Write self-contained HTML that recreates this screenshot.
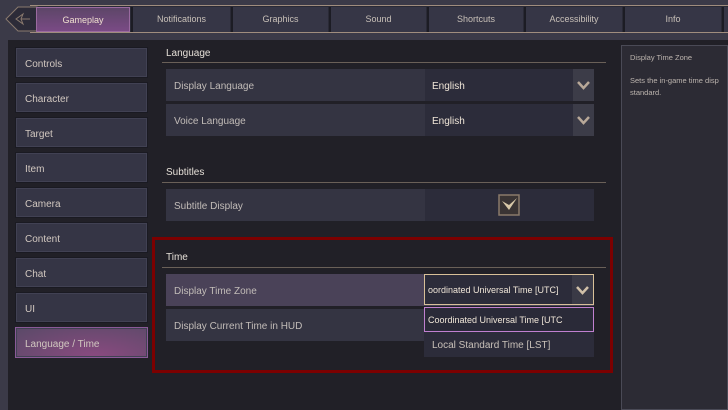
<!DOCTYPE html>
<html><head><style>
*{box-sizing:border-box;margin:0;padding:0}
body{width:728px;height:410px;overflow:hidden;background:#3b3a48;font-family:"Liberation Sans",sans-serif;position:relative;color:#c9c3c0}
.a{position:absolute}
.tabbar{left:30px;top:5px;width:698px;height:28px;background:#2a2a36;border-top:1px solid #a08d7e;border-bottom:1px solid #a08d7e}
.tab{top:7px;height:25px;background:#363646;color:#c8c0b8;font-size:9px;text-align:center;line-height:25px;border-left:2px solid #1c1c24}
.main{left:8px;top:40px;width:720px;height:370px;background:#212027}
.side{left:15px;height:31px;width:133px;background:#353545;border:1px solid #1a1a22;box-shadow:inset 0 0 0 1px #414153;font-size:10px;color:#d2c8c0;padding-left:9px;line-height:33px}
.hd{left:166px;font-size:10px;color:#e6e0d8}
.ln{left:162px;width:444px;height:1px;background:#6a6058}
.row{left:166px;width:428px;height:32px;background:#343442}
.lab{font-size:10px;color:#c2bcb8;padding-left:8px;line-height:35px;width:257px;height:32px}
.val{left:259px;top:0;width:148px;height:32px;background:#2c2c3a;font-size:10px;color:#f0e6d8;padding-left:7px;line-height:35px}
.arr{left:407px;top:0;width:21px;height:32px;background:#3c3c48}
</style></head><body>
<div class="a tabbar"></div>
<svg class="a" style="left:4px;top:5px" width="34" height="28"><polygon points="2,14 14,2 33,2 33,26 14,26" fill="#2c2b38" stroke="#8a7a6e"/><path d="M12 14 L19 9 L17 14 L19 19Z M17 14 L26 14" stroke="#8a7a6e" fill="none"/></svg>
<div class="a tab" style="left:36px;width:94px;background:linear-gradient(#5d4668,#7a4a85);border:1px solid #9a6aa0;color:#f0e0d0">Gameplay</div>
<div class="a tab" style="left:131px;width:99px">Notifications</div>
<div class="a tab" style="left:231px;width:97px">Graphics</div>
<div class="a tab" style="left:329px;width:97px">Sound</div>
<div class="a tab" style="left:427px;width:96px">Shortcuts</div>
<div class="a tab" style="left:524px;width:98px">Accessibility</div>
<div class="a tab" style="left:623px;width:98px">Info</div>
<div class="a tab" style="left:722px;width:6px"></div>
<div class="a main"></div>
<div class="a side" style="top:47px">Controls</div>
<div class="a side" style="top:82px">Character</div>
<div class="a side" style="top:117px">Target</div>
<div class="a side" style="top:152px">Item</div>
<div class="a side" style="top:187px">Camera</div>
<div class="a side" style="top:222px">Content</div>
<div class="a side" style="top:257px">Chat</div>
<div class="a side" style="top:292px">UI</div>
<div class="a side" style="top:327px;background:radial-gradient(ellipse at 60% 100%,#8a4a80,#5a4a68);border-color:#8a5a98">Language / Time</div>
<div class="a hd" style="top:48px">Language</div>
<div class="a ln" style="top:62px"></div>
<div class="a row" style="top:69px"><div class="lab">Display Language</div><div class="a val">English</div><div class="a arr"><svg width="21" height="32"><path d="M5 13 L10.5 19 L16 13" stroke="#b8a898" stroke-width="2.5" fill="none"/></svg></div></div>
<div class="a row" style="top:104px"><div class="lab">Voice Language</div><div class="a val">English</div><div class="a arr"><svg width="21" height="32"><path d="M5 13 L10.5 19 L16 13" stroke="#b8a898" stroke-width="2.5" fill="none"/></svg></div></div>
<div class="a hd" style="top:167px">Subtitles</div>
<div class="a ln" style="top:182px"></div>
<div class="a row" style="top:189px"><div class="lab">Subtitle Display</div><div class="a val" style="width:169px"></div>
<svg class="a" style="left:332px;top:5px" width="22" height="22"><rect x="1" y="1" width="20" height="20" fill="#3a3434" stroke="#8a7a6a" stroke-width="1.5"/><path d="M4 7 L11 16 L19 4 L11 11Z" fill="#d8c8a8"/></svg></div>
<div class="a" style="left:152px;top:237px;width:461px;height:136px;border:3px solid #7c0000"></div>
<div class="a hd" style="top:252px">Time</div>
<div class="a ln" style="top:267px;left:162px;width:444px"></div>
<div class="a row" style="top:274px;background:#4a4258"><div class="lab">Display Time Zone</div></div>
<div class="a row" style="top:309px"><div class="lab">Display Current Time in HUD</div></div>
<div class="a" style="left:424px;top:274px;width:170px;height:31px;background:#2c2c3a;border:1px solid #d8c098;font-size:9px;color:#f0e6d8;line-height:31px;padding-left:3px;overflow:hidden;white-space:nowrap">oordinated Universal Time [UTC]<div class="a" style="left:147px;top:0;width:21px;height:29px;background:#3a3a46"><svg width="21" height="29"><path d="M5 12 L10.5 18 L16 12" stroke="#d0c0a8" stroke-width="2.5" fill="none"/></svg></div></div>
<div class="a" style="left:424px;top:307px;width:170px;height:25px;background:#2a2a38;border:1px solid #c080d0;font-size:9px;color:#f0e6d8;line-height:24px;padding-left:3px;overflow:hidden;white-space:nowrap">Coordinated Universal Time [UTC</div>
<div class="a" style="left:424px;top:332px;width:170px;height:25px;background:#2c2c3a;font-size:10px;color:#c8c0b8;line-height:27px;padding-left:8px">Local Standard Time [LST]</div>
<div class="a" style="left:621px;top:45px;width:107px;height:365px;background:#2c2b34;border:1px solid #4a4a56;font-size:7.5px;color:#bcb4ae;padding:6px 0 0 8px;line-height:12px;white-space:nowrap;overflow:hidden">Display Time Zone<div style="margin-top:11px">Sets the in-game time disp<br>standard.</div></div>
</body></html>
